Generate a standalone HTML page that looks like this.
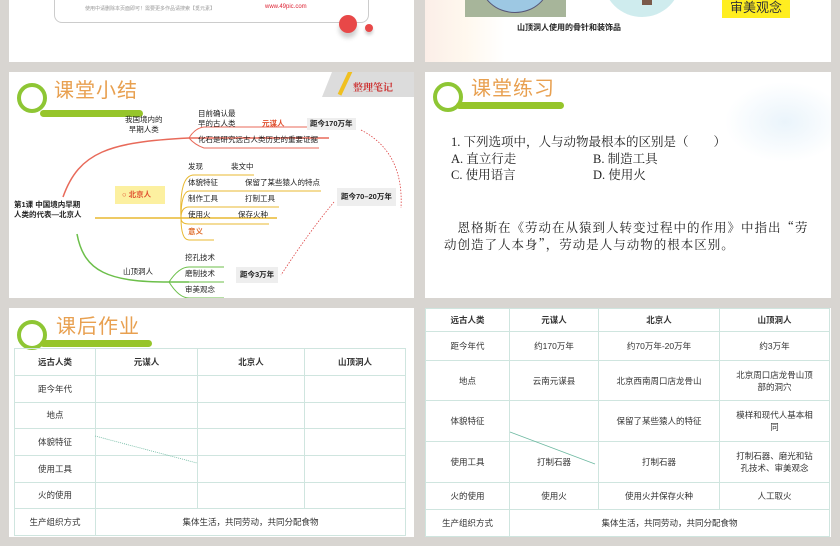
<!DOCTYPE html>
<html><head><meta charset="utf-8"><style>
*{margin:0;padding:0;box-sizing:border-box}
body{width:840px;height:546px;background:#d8d5d1;position:relative;overflow:hidden;font-family:"Liberation Sans","Noto Sans CJK SC",sans-serif;color:#333}
.s{position:absolute;background:#fff;overflow:hidden}
.a{position:absolute;white-space:nowrap}
.t7{font-size:7.5px;line-height:9.5px;color:#222}
.b{font-weight:bold}
.ttl{position:absolute;font-size:20px;color:#e8a050;letter-spacing:1px;line-height:22px}
table{border-collapse:collapse;position:absolute;font-size:8.5px;text-align:center;color:#333}
td{border:1px solid #cfe5df;padding:0}
</style></head><body>

<!-- top-left -->
<div class="s" style="left:9px;top:0;width:405px;height:62px">
 <div style="position:absolute;left:45px;top:-10px;width:315px;height:33px;border:1px solid #ccc;border-radius:8px;background:#fff"></div>
 <div class="a" style="left:76px;top:5px;font-size:5px;color:#999">使用中请删除本页面即可！需要更多作品请搜索【觅元素】</div>
 <div class="a" style="left:256px;top:4px;font-size:6px;color:#d23">www.49pic.com</div>
 <div style="position:absolute;left:330px;top:15px;width:18px;height:18px;border-radius:50%;background:#e84848;box-shadow:0 5px 5px rgba(0,0,0,.2)"></div>
 <div style="position:absolute;left:356px;top:24px;width:8px;height:8px;border-radius:50%;background:#e84848;box-shadow:0 3px 3px rgba(0,0,0,.2)"></div>
</div>

<!-- top-right -->
<div class="s" style="left:425px;top:0;width:406px;height:62px;background:linear-gradient(90deg,#fbeee8 0,#fff8ee 40px,#fff 80px)">
 <div style="position:absolute;left:40px;top:-10px;width:101px;height:27px;background:#a7b59a"></div>
 <div style="position:absolute;left:55px;top:-50px;width:70px;height:63px;border-radius:50%;background:#9dc8e3;border:1px solid #557"></div>
 <div style="position:absolute;left:178px;top:-60px;width:78px;height:77px;border-radius:50%;background:#cfecee"></div>
 <div style="position:absolute;left:217px;top:0;width:10px;height:5px;background:#7a5a4a"></div>
 <div class="a" style="left:297px;top:0;width:68px;height:18px;background:#ffee20;font-size:13px;line-height:15px;text-align:center;color:#333">审美观念</div>
 <div class="a b" style="left:92px;top:22px;font-size:8px;color:#222">山顶洞人使用的骨针和装饰品</div>
</div>

<!-- middle-left mindmap -->
<div class="s" style="left:9px;top:72px;width:405px;height:226px">
 <div style="position:absolute;left:8px;top:11px;width:30px;height:30px;border-radius:50%;border:4px solid #8ec634"></div>
 <div style="position:absolute;left:31px;top:38px;width:103px;height:7px;border-radius:4px;background:#96c52a"></div>
 <div class="ttl" style="left:45px;top:8px">课堂小结</div>
 <div style="position:absolute;left:313px;top:0;width:100px;height:25px;background:#dcdcdc;clip-path:polygon(10% 0,100% 0,100% 100%,0 100%)"></div>
 <div style="position:absolute;left:334px;top:-2px;width:4px;height:26px;background:#f0c020;transform:rotate(25deg)"></div>
 <div class="a b" style="left:344px;top:7px;font-size:10px;color:#c33;font-family:'Noto Serif CJK SC',serif">整理笔记</div>
 <svg width="405" height="226" style="position:absolute;left:0;top:0" fill="none">
  <path d="M54 125 C70 80 100 70 180 66 L320 66" stroke="#e86a5a" stroke-width="1.5"/>
  <path d="M180 66 Q186 56 195 55 L310 55" stroke="#e86a5a" stroke-width="1"/>
  <path d="M180 66 Q186 73 195 76 L310 76" stroke="#e86a5a" stroke-width="1"/>
  <path d="M86 146 L268 146" stroke="#e8b830" stroke-width="1.5"/>
  <path d="M172 146 Q170 103 185 103 L245 103 M172 146 Q172 120 180 119 L312 119 M172 146 Q172 135 180 135 L270 135 M172 146 Q172 152 180 152 L260 152 M172 146 Q172 168 180 168 L205 168" stroke="#e8b830" stroke-width="1"/>
  <path d="M68 162 C75 200 100 210 160 210 L180 210" stroke="#6cbf4a" stroke-width="1.5"/>
  <path d="M160 210 Q170 195 180 195 L215 195 M160 210 L215 210 M160 210 Q170 226 180 226 L215 226" stroke="#6cbf4a" stroke-width="1"/>
  <path d="M352 58 Q395 80 392 136" stroke="#d44" stroke-width="0.8" stroke-dasharray="1.5 1.5"/>
  <path d="M325 130 Q300 160 272 203" stroke="#d44" stroke-width="0.8" stroke-dasharray="1.5 1.5"/>
 </svg>
 <div class="a t7" style="left:116px;top:43px;text-align:center">我国境内的<br>早期人类</div>
 <div class="a t7" style="left:189px;top:37px">目前确认最<br>早的古人类</div>
 <div class="a t7 b" style="left:253px;top:47px;color:#e05030">元谋人</div>
 <div class="a t7 b" style="left:298px;top:46px;background:#eee;padding:1px 3px">距今170万年</div>
 <div class="a t7" style="left:189px;top:63px">化石是研究远古人类历史的重要证据</div>
 <div class="a t7" style="left:106px;top:114px;width:50px;height:18px;background:#fcf0a0"></div>
 <div class="a t7 b" style="left:113px;top:118px;color:#e05030">○ 北京人</div>
 <div class="a t7" style="left:179px;top:90px">发现</div><div class="a t7" style="left:222px;top:90px">裴文中</div>
 <div class="a t7" style="left:179px;top:106px">体貌特征</div><div class="a t7" style="left:236px;top:106px">保留了某些猿人的特点</div>
 <div class="a t7" style="left:179px;top:122px">制作工具</div><div class="a t7" style="left:236px;top:122px">打制工具</div>
 <div class="a t7" style="left:179px;top:138px">使用火</div><div class="a t7" style="left:229px;top:138px">保存火种</div>
 <div class="a t7 b" style="left:179px;top:155px;color:#e07030">意义</div>
 <div class="a t7 b" style="left:5px;top:128px">第1课 中国境内早期<br>人类的代表—北京人</div>
 <div class="a t7" style="left:114px;top:195px">山顶洞人</div>
 <div class="a t7" style="left:176px;top:181px">挖孔技术</div>
 <div class="a t7" style="left:176px;top:197px">磨制技术</div>
 <div class="a t7" style="left:176px;top:213px">审美观念</div>
 <div class="a t7 b" style="left:227px;top:195px;background:#eee;padding:3px 4px">距今3万年</div>
 <div class="a t7 b" style="left:328px;top:116px;background:#eee;padding:4px 4px">距今70–20万年</div>
</div>

<!-- middle-right -->
<div class="s" style="left:425px;top:72px;width:406px;height:226px;background:radial-gradient(ellipse 60px 40px at 360px 50px,#eaf4fb,#fff)">
 <div style="position:absolute;left:8px;top:10px;width:30px;height:30px;border-radius:50%;border:4px solid #8ec634"></div>
 <div style="position:absolute;left:31px;top:30px;width:108px;height:7px;border-radius:4px;background:#96c52a"></div>
 <div class="ttl" style="left:46px;top:6px">课堂练习</div>
 <div style="position:absolute;left:26px;top:62px;font-family:'Liberation Serif','Noto Serif CJK SC',serif;font-size:12.5px;line-height:16.5px;color:#222">
  <div>1. 下列选项中，人与动物最根本的区别是（　　）</div>
  <div>A. 直立行走<span style="position:absolute;left:142px">B. 制造工具</span></div>
  <div>C. 使用语言<span style="position:absolute;left:142px">D. 使用火</span></div>
 </div>
 <div style="position:absolute;left:19px;top:147px;width:400px;white-space:nowrap;font-family:'Noto Serif CJK SC',serif;font-size:12.5px;letter-spacing:1px;line-height:17px;color:#222">　恩格斯在《劳动在从猿到人转变过程中的作用》中指出“劳<br>动创造了人本身”，劳动是人与动物的根本区别。</div>
</div>

<!-- bottom-left -->
<div class="s" style="left:9px;top:308px;width:405px;height:229px">
 <div style="position:absolute;left:8px;top:12px;width:30px;height:30px;border-radius:50%;border:4px solid #8ec634"></div>
 <div style="position:absolute;left:31px;top:32px;width:112px;height:7px;border-radius:4px;background:#96c52a"></div>
 <div class="ttl" style="left:47px;top:8px">课后作业</div>
 <table style="left:5px;top:40px;width:392px;height:188px">
  <tr style="height:27px"><td style="width:81px" class="b">远古人类</td><td style="width:102px" class="b">元谋人</td><td style="width:107px" class="b">北京人</td><td class="b">山顶洞人</td></tr>
  <tr><td>距今年代</td><td></td><td></td><td></td></tr>
  <tr><td>地点</td><td></td><td></td><td></td></tr>
  <tr><td>体貌特征</td><td></td><td></td><td></td></tr>
  <tr><td>使用工具</td><td></td><td></td><td></td></tr>
  <tr><td>火的使用</td><td></td><td></td><td></td></tr>
  <tr><td>生产组织方式</td><td colspan="3">集体生活，共同劳动，共同分配食物</td></tr>
 </table>
 <svg width="405" height="229" style="position:absolute;left:0;top:0"><path d="M86 128 L188 155" stroke="#6cb8a0" stroke-width="0.8" stroke-dasharray="1 1"/></svg>
</div>

<!-- bottom-right -->
<div class="s" style="left:425px;top:308px;width:406px;height:229px">
 <table style="left:0;top:0;width:405px;height:229px">
  <tr style="height:23px"><td style="width:84px" class="b">远古人类</td><td style="width:89px" class="b">元谋人</td><td style="width:121px" class="b">北京人</td><td class="b">山顶洞人</td></tr>
  <tr style="height:29px"><td>距今年代</td><td>约170万年</td><td>约70万年-20万年</td><td>约3万年</td></tr>
  <tr style="height:40px"><td>地点</td><td>云南元谋县</td><td>北京西南周口店龙骨山</td><td>北京周口店龙骨山顶<br>部的洞穴</td></tr>
  <tr style="height:41px"><td>体貌特征</td><td></td><td>保留了某些猿人的特征</td><td>模样和现代人基本相<br>同</td></tr>
  <tr style="height:41px"><td>使用工具</td><td>打制石器</td><td>打制石器</td><td>打制石器、磨光和钻<br>孔技术、审美观念</td></tr>
  <tr style="height:27px"><td>火的使用</td><td>使用火</td><td>使用火并保存火种</td><td>人工取火</td></tr>
  <tr><td>生产组织方式</td><td colspan="3">集体生活，共同劳动，共同分配食物</td></tr>
 </table>
 <svg width="406" height="229" style="position:absolute;left:0;top:0"><path d="M85 124 L170 156" stroke="#6cb8a0" stroke-width="0.8"/></svg>
</div>
</body></html>
